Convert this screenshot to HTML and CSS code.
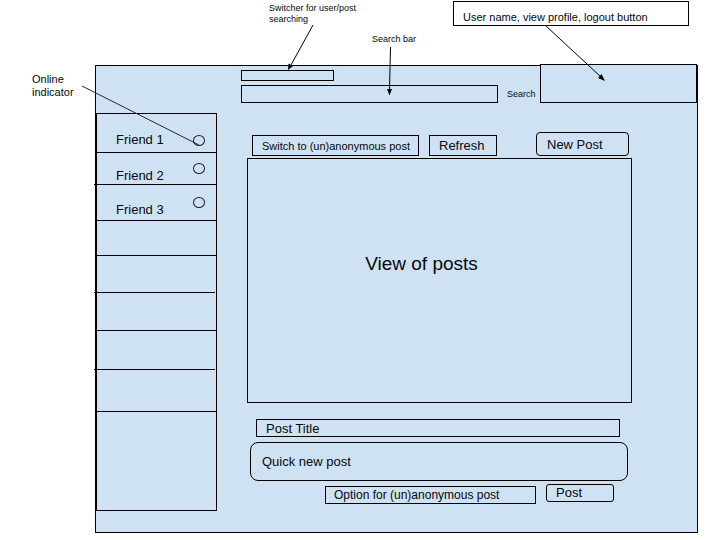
FILE: index.html
```html
<!DOCTYPE html>
<html lang="en">
<head>
<meta charset="utf-8">
<title>Wireframe</title>
<link rel="stylesheet" href="styles.css">
</head>
<body>
<div class="sheet">
  <div class="notes">
    <p class="note note-switcher">Switcher for user/post<br>searching</p>
    <p class="note note-search">Search bar</p>
    <div class="note-account">User name, view profile, logout button
      <svg class="account-arrow" width="62" height="58" viewBox="0 0 62 58" aria-hidden="true">
        <path d="M1 1L56 52" fill="none" stroke="#000"/>
        <path d="M60 56L53 53L56.500 49Z"/>
      </svg>
    </div>
  </div>
  <div class="stage">
    <p class="note-online">Online<br>indicator</p>
    <div class="app">
      <header class="top">
        <form class="search">
          <select class="switcher" aria-label="Search users or posts"><option></option></select>
          <div class="search-row">
            <input class="search-input" type="search" aria-label="Search bar">
            <button class="search-button" type="button">Search</button>
          </div>
        </form>
        <div class="account"></div>
      </header>
      <div class="body">
        <ul class="friends">
          <li class="friend first"><span class="name">Friend 1</span><i class="status"></i></li>
          <li class="friend wide"><span class="name">Friend 2</span><i class="status"></i></li>
          <li class="friend"><span class="name">Friend 3</span><i class="status"></i></li>
          <li class="friend"></li>
          <li class="friend shifted"></li>
          <li class="friend"></li>
          <li class="friend shifted"></li>
          <li class="friend"></li>
        </ul>
        <main class="main">
          <div class="toolbar">
            <button class="box toggle" type="button">Switch to (un)anonymous post</button>
            <button class="box refresh" type="button">Refresh</button>
            <button class="box new-post" type="button">New Post</button>
          </div>
          <section class="posts">View of posts</section>
          <form class="composer">
            <input class="box title" type="text" value="Post Title" aria-label="Post title">
            <input class="box quick" type="text" value="Quick new post" aria-label="Quick new post">
            <div class="actions">
              <button class="box option" type="button">Option for (un)anonymous post</button>
              <button class="box post" type="button">Post</button>
            </div>
          </form>
        </main>
      </div>
    </div>
  </div>
  <svg class="arrows" width="400" height="150" viewBox="0 0 400 150" aria-hidden="true">
    <g fill="none" stroke="#000">
      <path d="M313 25L291 65"/>
      <path d="M390.500 47L389.500 90"/>
      <path d="M82 86L199 145" stroke="#1b2a33"/>
    </g>
    <path d="M288 70L288.500 63.500L293 66Z"/>
    <path d="M389.500 95.500L387 89L392 89Z"/>
  </svg>
</div>
</body>
</html>
```
FILE: styles.css
```css
* {
  box-sizing: border-box;
}

body {
  margin: 0;
  background: #fff;
  color: #05090d;
  font: 13px/16px "Liberation Sans", Arial, sans-serif;
}

p, ul {
  margin: 0;
  padding: 0;
}

button, input, select {
  margin: 0;
  font: inherit;
  color: inherit;
  background: transparent;
  border: 1px solid #000;
  border-radius: 0;
  appearance: none;
  outline: none;
}

.sheet {
  position: relative;
}

.notes {
  display: flex;
  align-items: flex-start;
  min-height: 65px;
  padding: 0 31px 0 269px;
}

.note {
  font-size: 9px;
  line-height: 11px;
  white-space: nowrap;
}

.note-switcher {
  width: 92px;
  padding-top: 3px;
}

.note-search {
  margin-left: 11px;
  padding-top: 34px;
}

.note-account {
  position: relative;
  width: 236px;
  margin: 1px 0 0 auto;
  padding: 7px 9px 0;
  border: 1px solid #000;
  font-size: 11px;
  white-space: nowrap;
}

.account-arrow {
  position: absolute;
  top: 23px;
  left: 91px;
}

.stage {
  display: grid;
  grid-template-columns: 95px 1fr;
  padding-right: 22px;
}

.note-online {
  padding: 8px 0 0 32px;
  font-size: 11px;
  line-height: 13px;
}

.app {
  border: 1px solid #000;
  background: #cfe2f3;
  padding-bottom: 21px;
}

.top {
  display: flex;
  padding-left: 145px;
}

.search {
  display: flex;
  flex: 1;
  flex-direction: column;
  gap: 4px;
  padding-top: 4px;
}

.switcher {
  width: 93px;
  height: 11px;
  padding: 0;
}

.search-row {
  display: flex;
}

.search-input {
  flex: 1;
  min-width: 0;
  height: 18px;
  padding: 0 8px;
}

.search-button {
  width: 42px;
  padding: 0 0 0 9px;
  border: 0;
  font-size: 9px;
  text-align: left;
}

.account {
  width: 157px;
  height: 39px;
  margin-top: -2px;
  border: 1px solid #000;
  background: #cfe2f3;
}

.body {
  display: flex;
  align-items: flex-start;
  padding-top: 10px;
}

.friends {
  display: grid;
  grid-template-rows: 39px 32px 36px 35px 37px 38px 39px 42px;
  width: 121px;
  padding-bottom: 98px;
  border: 1px solid #000;
  list-style: none;
}

.friend {
  display: flex;
  align-items: center;
  justify-content: space-between;
  padding: 0 11px 0 19px;
  border-bottom: 1px solid #000;
}

.friend.first {
  padding-top: 14px;
}

.friend.wide {
  margin: 0 -1px 0 -3px;
  padding: 0 12px 0 22px;
}

.friend.shifted {
  margin: 0 1px 0 -3px;
}

.name {
  padding-top: 14px;
}

.first .name {
  padding-top: 0;
}

.status {
  width: 12px;
  height: 11px;
  border: 1px solid #16232c;
  border-radius: 50%;
}

.main {
  flex: 1;
  padding: 19px 65px 0 30px;
}

.box {
  padding: 0 9px;
  text-align: left;
  white-space: nowrap;
}

.toolbar {
  display: flex;
  align-items: flex-end;
  gap: 10px;
  padding: 0 3px 2px 5px;
}

.toggle {
  width: 167px;
  height: 21px;
  font-size: 11px;
}

.refresh {
  width: 68px;
  height: 21px;
}

.new-post {
  width: 93px;
  height: 24px;
  margin-left: auto;
  padding: 2px 10px 0;
  border-radius: 4px;
}

.posts {
  display: flex;
  align-items: center;
  justify-content: center;
  min-height: 245px;
  padding: 0 36px 34px 0;
  border: 1px solid #000;
  font-size: 19px;
}

.composer {
  display: flex;
  flex-direction: column;
  padding: 16px 4px 0 3px;
}

.title {
  height: 18px;
  margin: 0 8px 5px 6px;
}

.quick {
  height: 39px;
  padding: 0 11px;
  border-radius: 8px;
}

.actions {
  display: flex;
  justify-content: flex-end;
  align-items: flex-start;
  gap: 10px;
  padding: 3px 14px 0 0;
}

.option {
  width: 211px;
  height: 18px;
  margin-top: 2px;
  padding: 0 8px;
  font-size: 12px;
}

.post {
  width: 68px;
  height: 18px;
  border-radius: 3px;
}

.arrows {
  position: absolute;
  top: 0;
  left: 0;
  pointer-events: none;
}
```
